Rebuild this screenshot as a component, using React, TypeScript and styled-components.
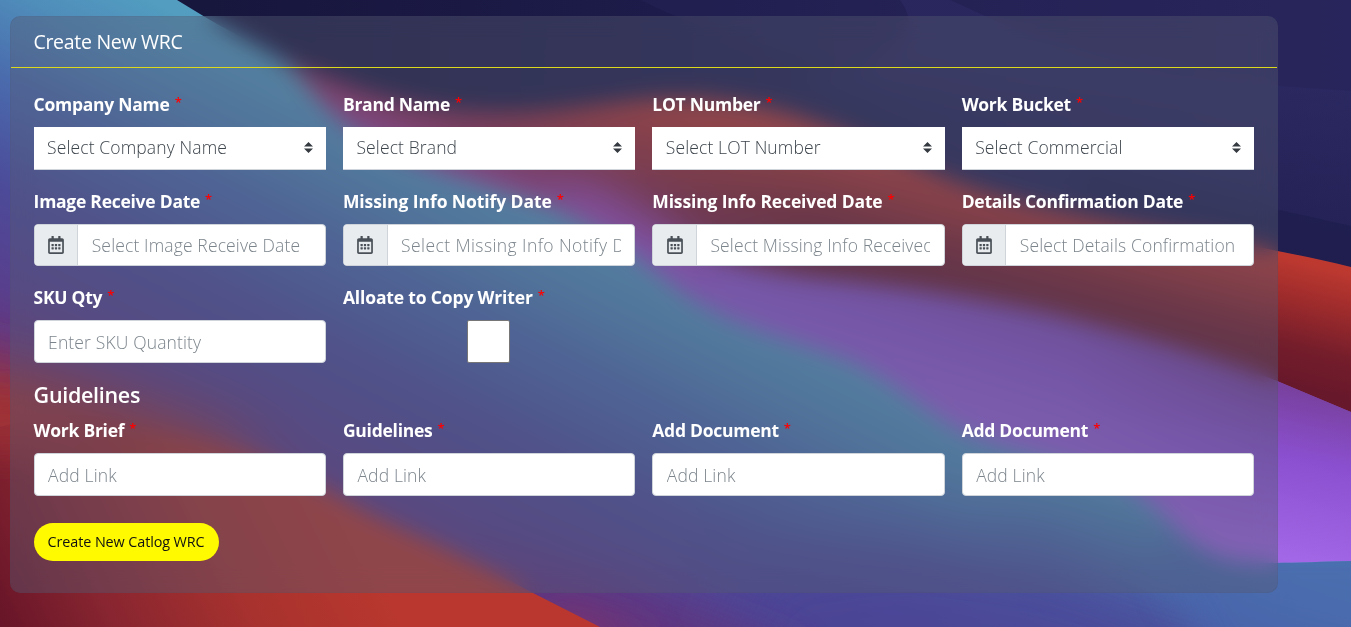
import React from "react";
import styled, { createGlobalStyle } from "styled-components";
import { FaRegCalendarAlt } from "react-icons/fa";

const GlobalStyle = createGlobalStyle`
  *, *::before, *::after { box-sizing: border-box; }
  html, body { margin: 0; padding: 0; }
  body {
    font-family: "Open Sans", "Noto Sans", sans-serif;
    background: #221f50;
    color: #fff;
    overflow: hidden;
  }
`;

const Page = styled.main`
  position: relative;
  width: 1351px;
  height: 627px;
  padding: 16px 73px 34px 10px;
  overflow: hidden;
`;

const Wallpaper = styled.svg`
  position: absolute;
  inset: 0;
  width: 100%;
  height: 100%;
`;

const Card = styled.section`
  position: relative;
  height: 577px;
  border: 1px solid rgba(60, 60, 90, 0.08);
  border-radius: 10px;
  background: rgba(86, 90, 114, 0.42);
  backdrop-filter: blur(11px);
`;

const CardHeader = styled.header`
  height: 51px;
  padding: 0 22.4px;
  border-bottom: 1px solid #dcd81c;
`;

const CardTitle = styled.h3`
  margin: 0;
  font-size: 19.5px;
  font-weight: 400;
  line-height: 50px;
  letter-spacing: -0.28px;
`;

const Form = styled.form`
  padding: 23px 23px 0 22.6px;
`;

const Row = styled.div<{ $gap?: number }>`
  display: grid;
  grid-template-columns: repeat(4, 1fr);
  column-gap: 17px;
  margin-bottom: ${(p) => p.$gap ?? 18}px;
`;

const Field = styled.div`
  display: flex;
  flex-direction: column;
  min-width: 0;
`;

const Label = styled.label<{ $tracking?: number }>`
  height: 28px;
  margin-bottom: 8px;
  font-size: 17.5px;
  font-weight: 700;
  line-height: 27px;
  letter-spacing: ${(p) => p.$tracking ?? -0.26}px;
  white-space: nowrap;
`;

const Required = styled.span`
  margin-left: 5px;
  color: #f00;
  font-size: 13px;
  font-weight: 600;
  line-height: 0;
  vertical-align: 4px;
`;

const SelectWrap = styled.div`
  display: grid;
  align-items: center;
  height: 43px;
  border-bottom: 1px solid #ced4da;
  background: #fff;
`;

const Select = styled.select`
  grid-area: 1 / 1;
  width: 100%;
  height: 42px;
  padding: 0 30px 2px 13.5px;
  border: 0;
  border-radius: 0;
  outline: 0;
  appearance: none;
  background: transparent;
  color: #3c444b;
  font: 300 17.5px "Open Sans", "Noto Sans", sans-serif;
  letter-spacing: 0.12px;
`;

const Arrows = styled.svg`
  grid-area: 1 / 1;
  justify-self: end;
  width: 9px;
  height: 11px;
  margin: 0 13px 1px 0;
  pointer-events: none;
`;

const Control = styled.div<{ $height?: number }>`
  display: flex;
  height: ${(p) => p.$height ?? 43}px;
  overflow: hidden;
  border: 1px solid #ced4da;
  border-radius: 4px;
  background: #fff;
`;

const Addon = styled.span`
  display: flex;
  flex: 0 0 43.6px;
  align-items: center;
  justify-content: center;
  border-right: 1px solid #ced4da;
  background: #e9ecef;
  color: #495057;
  font-size: 18px;
`;

const Input = styled.input<{ $tracking?: number }>`
  flex: 1;
  min-width: 0;
  padding: 0 13.5px 0 13.5px;
  border: 0;
  outline: 0;
  background: transparent;
  color: #495057;
  font: 300 17.5px "Open Sans", "Noto Sans", sans-serif;
  letter-spacing: ${(p) => p.$tracking ?? 0.14}px;

  &::placeholder {
    color: #7c858c;
    opacity: 1;
  }
`;

const CheckBox = styled.input`
  align-self: center;
  width: 43px;
  height: 43px;
  margin: 0 2px 0 0;
  border: 1px solid #767676;
  border-radius: 2px;
  appearance: none;
  background: #fff;
`;

const SectionTitle = styled.h4`
  height: 28px;
  margin: 0 0 8px;
  font-size: 21.5px;
  font-weight: 600;
  line-height: 28px;
  letter-spacing: -0.3px;
`;

const Submit = styled.button`
  display: block;
  width: 185px;
  height: 38px;
  padding: 0 0 1px;
  border: 0;
  border-radius: 19px;
  background: #fffa00;
  color: #111;
  font: 400 14.4px "Open Sans", "Noto Sans", sans-serif;
  letter-spacing: -0.1px;
  white-space: nowrap;
`;

const BLUE_EDGE =
  "M177 0 L205 17 C240 38 270 50 292 68 C312 90 325 110 350 128 C400 165 480 182 545 205 C610 232 640 262 690 298 C740 330 800 342 850 362 C900 386 925 412 962 432 C1010 454 1080 462 1125 486 C1170 512 1180 545 1225 558 C1250 566 1300 562 1351 561";

function Waves() {
  return (
    <Wallpaper viewBox="0 0 1351 627" preserveAspectRatio="none" aria-hidden="true">
      <defs>
        <linearGradient id="navy" gradientUnits="userSpaceOnUse" x1="200" y1="0" x2="1351" y2="0">
          <stop offset="0" stopColor="#17163d" />
          <stop offset="0.4" stopColor="#1d1b49" />
          <stop offset="1" stopColor="#28255b" />
        </linearGradient>
        <linearGradient id="navyFold" gradientUnits="userSpaceOnUse" x1="1300" y1="85" x2="1280" y2="235">
          <stop offset="0" stopColor="#2e2c66" />
          <stop offset="1" stopColor="#1f1e50" />
        </linearGradient>
        <linearGradient id="ridge" gradientUnits="userSpaceOnUse" x1="1277" y1="254" x2="1247" y2="372">
          <stop offset="0" stopColor="#bd3930" />
          <stop offset="0.3" stopColor="#a02c2c" />
          <stop offset="0.7" stopColor="#741d2b" />
          <stop offset="1" stopColor="#68182b" />
        </linearGradient>
        <linearGradient id="ridgeMid" gradientUnits="userSpaceOnUse" x1="640" y1="100" x2="590" y2="225">
          <stop offset="0" stopColor="#b8362e" />
          <stop offset="0.35" stopColor="#a22d35" />
          <stop offset="0.7" stopColor="#8e2a50" />
          <stop offset="1" stopColor="#a03f9c" />
        </linearGradient>
        <linearGradient id="ridgeFade" gradientUnits="userSpaceOnUse" x1="600" y1="0" x2="820" y2="0">
          <stop offset="0" stopColor="#fff" />
          <stop offset="1" stopColor="#000" />
        </linearGradient>
        <mask id="ridgeMask" maskUnits="userSpaceOnUse" x="0" y="0" width="1351" height="627">
          <rect width="1351" height="627" fill="url(#ridgeFade)" />
        </mask>
        <linearGradient id="violet" gradientUnits="userSpaceOnUse" x1="1000" y1="303" x2="950" y2="470">
          <stop offset="0" stopColor="#7f48b2" />
          <stop offset="0.2" stopColor="#8850c8" />
          <stop offset="0.6" stopColor="#955cd6" />
          <stop offset="1" stopColor="#a266dc" />
        </linearGradient>
        <linearGradient id="violetRight" gradientUnits="userSpaceOnUse" x1="1320" y1="395" x2="1290" y2="560">
          <stop offset="0" stopColor="#78409c" />
          <stop offset="0.4" stopColor="#8a4fcf" />
          <stop offset="1" stopColor="#a368e8" />
        </linearGradient>
        <linearGradient id="violetFade" gradientUnits="userSpaceOnUse" x1="1080" y1="0" x2="1277" y2="0">
          <stop offset="0" stopColor="#000" />
          <stop offset="1" stopColor="#fff" />
        </linearGradient>
        <mask id="violetMask" maskUnits="userSpaceOnUse" x="0" y="0" width="1351" height="627">
          <rect width="1351" height="627" fill="url(#violetFade)" />
        </mask>
        <linearGradient id="blue" gradientUnits="userSpaceOnUse" x1="550" y1="200" x2="377" y2="546">
          <stop offset="0" stopColor="#529dc0" />
          <stop offset="0.15" stopColor="#4f8cba" />
          <stop offset="0.35" stopColor="#4a6bad" />
          <stop offset="0.6" stopColor="#4c4b99" />
          <stop offset="0.8" stopColor="#56418f" />
          <stop offset="1" stopColor="#633682" />
        </linearGradient>
        <linearGradient id="ember" gradientUnits="userSpaceOnUse" x1="330" y1="475" x2="0" y2="640">
          <stop offset="0" stopColor="#b9372e" />
          <stop offset="0.35" stopColor="#a8322e" />
          <stop offset="0.7" stopColor="#882530" />
          <stop offset="1" stopColor="#651428" />
        </linearGradient>
        <filter id="soft30" x="-50%" y="-50%" width="200%" height="200%">
          <feGaussianBlur stdDeviation="30" />
        </filter>
        <filter id="soft18" x="-50%" y="-50%" width="200%" height="200%">
          <feGaussianBlur stdDeviation="18" />
        </filter>
        <clipPath id="blueClip">
          <path d={`${BLUE_EDGE} V627 H0 V0 Z`} />
        </clipPath>
      </defs>

      <rect width="1351" height="627" fill="url(#navy)" />
      <path d="M640 0 C720 40 850 75 980 90 C1100 100 1200 80 1351 91 V0 Z" fill="#2a2860" opacity="0.3" />
      <path d="M950 0 L985 16 C1080 60 1180 82 1277 86 L1351 91 V270 L1000 180 C930 130 850 90 780 80 C880 70 930 40 900 0 Z" fill="url(#navyFold)" opacity="0.5" />
      <path d="M1080 160 C1180 190 1260 205 1351 226 V300 H1080 Z" fill="#1d1c4b" opacity="0.6" />

      <path d="M270 55 C330 76 370 100 460 110 C550 119 620 96 690 98 C780 102 840 130 905 160 C980 198 1080 216 1160 230 C1220 240 1290 252 1351 267 V627 H270 Z" fill="url(#ridge)" />
      <g mask="url(#ridgeMask)">
        <path d="M270 55 C330 76 370 100 460 110 C550 119 620 96 690 98 C780 102 840 130 905 160 L1000 240 L800 500 H270 Z" fill="url(#ridgeMid)" />
      </g>
      <path d="M600 232 C640 235 700 262 800 276 C900 286 960 294 1050 313 C1150 338 1230 362 1277 381 L1351 412 V627 H600 Z" fill="url(#violet)" />
      <g mask="url(#violetMask)">
        <path d="M1050 313 C1150 338 1230 362 1277 381 L1351 412 V627 H1050 Z" fill="url(#violetRight)" opacity="0.85" />
      </g>
      <ellipse cx="630" cy="238" rx="95" ry="26" transform="rotate(32 630 238)" fill="#a04cc4" opacity="0.85" filter="url(#soft18)" />

      <path d={`${BLUE_EDGE} V627 H0 V0 Z`} fill="url(#blue)" />
      <g clipPath="url(#blueClip)">
        <path d="M980 490 L1120 500 L1230 580 L1230 660 H1000 Z" fill="#4a62a8" opacity="0.5" filter="url(#soft30)" />
        <path d="M700 700 L760 560 L900 540 L1050 560 L1200 612 L1420 660 V720 H700 Z" fill="#4c4495" opacity="0.8" filter="url(#soft30)" />
        <path d="M1140 535 L1440 535 V690 H1230 Z" fill="#4a65ac" opacity="0.85" filter="url(#soft18)" />
        <path d="M-60 350 L120 400 L260 450 L120 560 L-60 600 Z" fill="#a3332f" filter="url(#soft30)" />
        <path d="M800 650 L640 590 L500 560 L480 680 H800 Z" fill="#5f357f" opacity="0.8" filter="url(#soft18)" />
        <path d="M660 640 L560 600 L520 660 Z" fill="#83336b" opacity="0.7" filter="url(#soft18)" />
      </g>
      <path d="M-10 430 C60 405 160 428 240 450 C300 468 340 502 400 528 C450 550 490 570 533 593 L600 627 H-10 Z" fill="url(#ember)" />
      <ellipse cx="10" cy="425" rx="90" ry="28" fill="#9e3137" opacity="0.8" filter="url(#soft18)" />
    </Wallpaper>
  );
}

function FieldLabel({ text, id, tracking }: { text: string; id: string; tracking?: number }) {
  return (
    <Label htmlFor={id} $tracking={tracking}>
      {text}
      <Required>*</Required>
    </Label>
  );
}

const selects = [
  { id: "company", label: "Company Name", option: "Select Company Name" },
  { id: "brand", label: "Brand Name", option: "Select Brand" },
  { id: "lot", label: "LOT Number", option: "Select LOT Number" },
  { id: "bucket", label: "Work Bucket", option: "Select Commercial" },
];

const dates = [
  { id: "image-date", label: "Image Receive Date", hint: "Select Image Receive Date" },
  { id: "notify-date", label: "Missing Info Notify Date", hint: "Select Missing Info Notify Date", tracking: -0.08, hintTracking: 0.42 },
  { id: "received-date", label: "Missing Info Received Date", hint: "Select Missing Info Received Date", tracking: -0.14 },
  { id: "confirm-date", label: "Details Confirmation Date", hint: "Select Details Confirmation" },
];

const links = [
  { id: "brief", label: "Work Brief" },
  { id: "guidelines", label: "Guidelines" },
  { id: "doc-1", label: "Add Document" },
  { id: "doc-2", label: "Add Document" },
];

export default function App() {
  return (
    <>
      <GlobalStyle />
      <Page>
        <Waves />
        <Card>
          <CardHeader>
            <CardTitle>Create New WRC</CardTitle>
          </CardHeader>
          <Form onSubmit={(e) => e.preventDefault()}>
            <Row>
              {selects.map((s) => (
                <Field key={s.id}>
                  <FieldLabel id={s.id} text={s.label} />
                  <SelectWrap>
                    <Select id={s.id}>
                      <option>{s.option}</option>
                    </Select>
                    <Arrows viewBox="0 0 4 5" preserveAspectRatio="none">
                      <path fill="#343a40" d="M2 0L0 2h4zm0 5L0 3h4z" />
                    </Arrows>
                  </SelectWrap>
                </Field>
              ))}
            </Row>
            <Row>
              {dates.map((d) => (
                <Field key={d.id}>
                  <FieldLabel id={d.id} text={d.label} tracking={d.tracking} />
                  <Control $height={42}>
                    <Addon>
                      <FaRegCalendarAlt />
                    </Addon>
                    <Input id={d.id} placeholder={d.hint} $tracking={d.hintTracking} />
                  </Control>
                </Field>
              ))}
            </Row>
            <Row>
              <Field>
                <FieldLabel id="sku" text="SKU Qty" />
                <Control>
                  <Input id="sku" placeholder="Enter SKU Quantity" />
                </Control>
              </Field>
              <Field>
                <FieldLabel id="copy-writer" text="Alloate to Copy Writer" tracking={-0.16} />
                <CheckBox id="copy-writer" type="checkbox" />
              </Field>
            </Row>
            <SectionTitle>Guidelines</SectionTitle>
            <Row $gap={27}>
              {links.map((l) => (
                <Field key={l.id}>
                  <FieldLabel id={l.id} text={l.label} />
                  <Control>
                    <Input id={l.id} placeholder="Add Link" />
                  </Control>
                </Field>
              ))}
            </Row>
            <Submit type="submit">Create New Catlog WRC</Submit>
          </Form>
        </Card>
      </Page>
    </>
  );
}
